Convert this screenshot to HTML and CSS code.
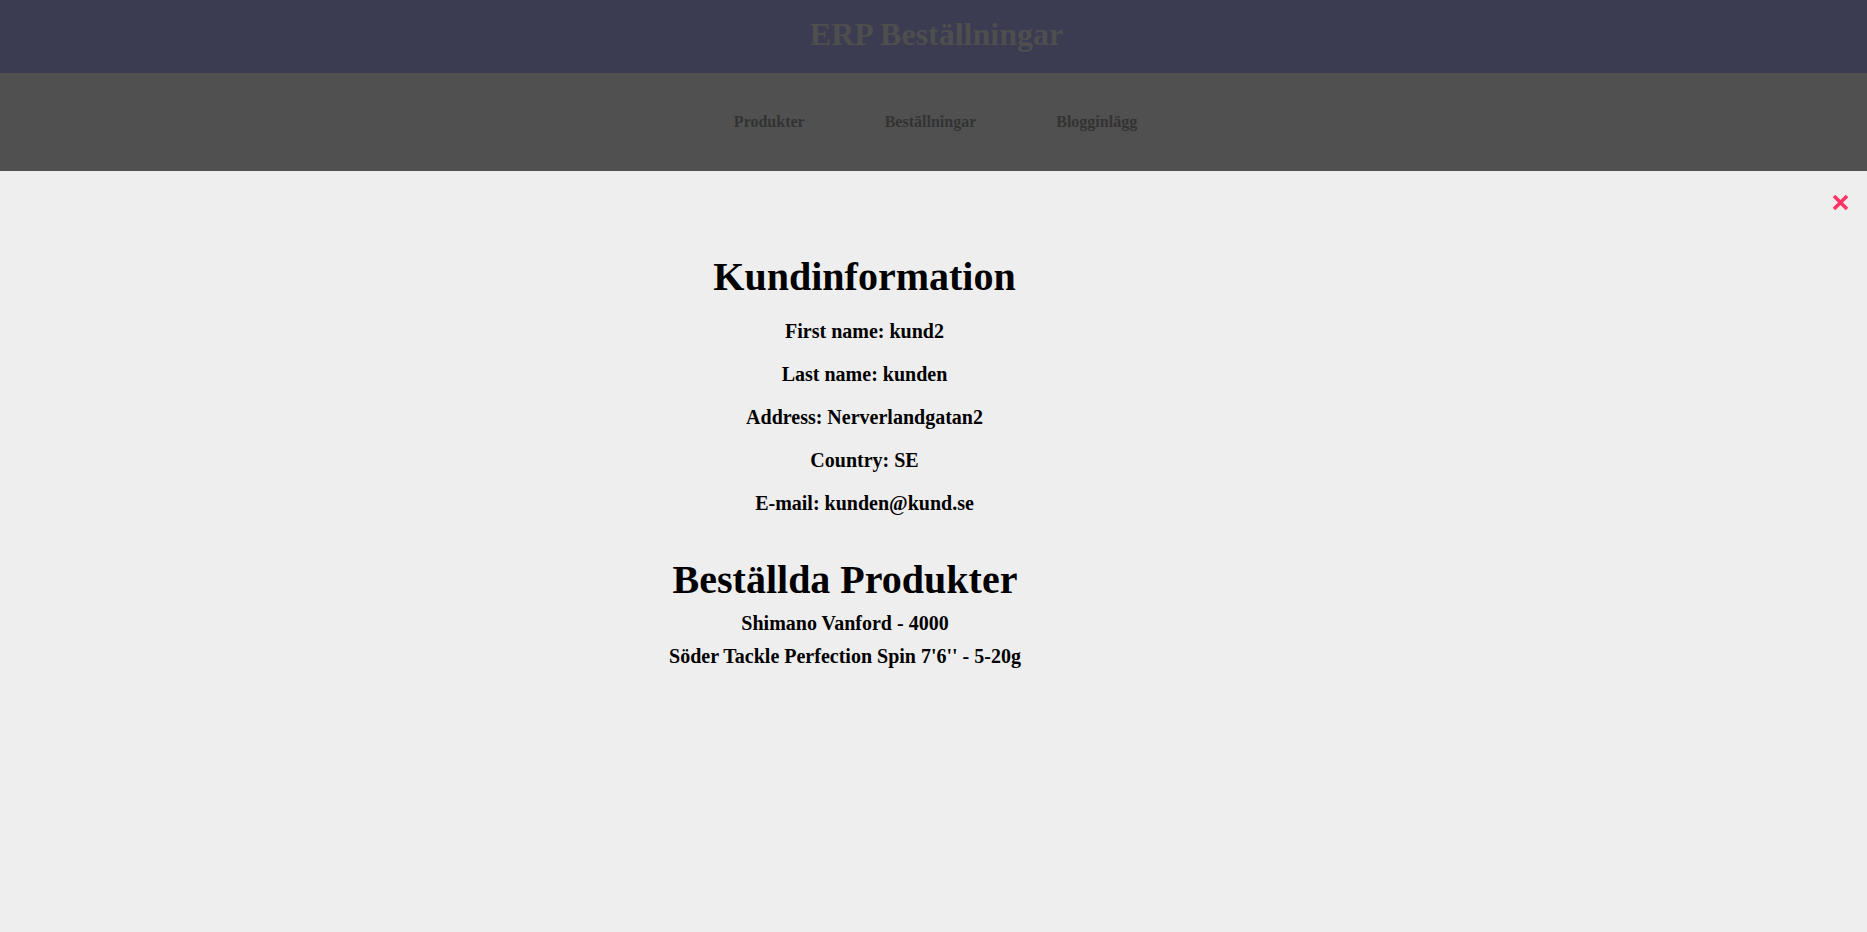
FILE: index.html
```html
<!DOCTYPE html>
<html lang="sv">
<head>
<meta charset="utf-8">
<title>ERP Beställningar</title>
<link rel="stylesheet" href="styles.css">
</head>
<body>
<header class="topbar">
  <h1 class="brand">ERP Beställningar</h1>
</header>
<nav class="mainnav">
  <a class="navlink" href="#">Produkter</a>
  <a class="navlink" href="#">Beställningar</a>
  <a class="navlink" href="#">Blogginlägg</a>
</nav>
<main class="modal">
  <button class="close" aria-label="Stäng">
    <svg width="17" height="17" viewBox="0 0 17 17"><path d="M2 2 L15 15 M15 2 L2 15" stroke="#ff3366" stroke-width="3.6" stroke-linecap="butt" fill="none"/></svg>
  </button>
  <div class="content">
    <section class="customer">
      <h2 class="heading">Kundinformation</h2>
      <p class="info">First name: kund2</p>
      <p class="info">Last name: kunden</p>
      <p class="info">Address: Nerverlandgatan2</p>
      <p class="info">Country: SE</p>
      <p class="info">E-mail: kunden@kund.se</p>
    </section>
    <section class="products">
      <h2 class="heading">Beställda Produkter</h2>
      <p class="item">Shimano Vanford - 4000</p>
      <p class="item">Söder Tackle Perfection Spin 7'6'' - 5-20g</p>
    </section>
  </div>
</main>
</body>
</html>
```

FILE: styles.css
```css
html, body {
  margin: 0;
  padding: 0;
}
body {
  background: #eeeeee;
  font-family: "Liberation Serif", "Times New Roman", serif;
  color: #000;
  min-height: 932px;
}
.topbar {
  background: #3b3b52;
  height: 73px;
  display: flex;
  justify-content: center;
  align-items: flex-start;
}
.brand {
  margin: 0;
  padding-top: 16px;
  font-size: 32px;
  font-weight: bold;
  color: #4e4e4e;
  line-height: 37px;
  transform: translateX(3px);
}
.mainnav {
  background: #505050;
  height: 98px;
  display: flex;
  justify-content: center;
  align-items: flex-start;
  gap: 80px;
  padding-left: 4px;
  box-sizing: border-box;
}
.navlink {
  color: #333333;
  text-decoration: none;
  font-weight: bold;
  font-size: 16px;
  line-height: 18px;
  margin-top: 40px;
}
.modal {
  position: relative;
  padding-top: 83px;
}
.close {
  position: absolute;
  top: 23px;
  right: 18px;
  width: 17px;
  height: 17px;
  padding: 0;
  border: 0;
  background: none;
  cursor: pointer;
  display: block;
}
.close svg {
  display: block;
}
.content {
  width: 900px;
  margin-left: 395px;
  text-align: center;
}
.customer {
  padding-left: 39px;
}
.heading {
  margin: 0;
  font-size: 40px;
  line-height: 46px;
  font-weight: bold;
}
.info {
  margin: 20px 0 0;
  font-size: 20px;
  line-height: 23px;
  font-weight: bold;
}
.products {
  margin-top: 42px;
}
.item {
  margin: 9px 0 0;
  font-size: 20px;
  line-height: 23px;
  font-weight: bold;
}
.products .item + .item {
  margin-top: 9.5px;
}
```
